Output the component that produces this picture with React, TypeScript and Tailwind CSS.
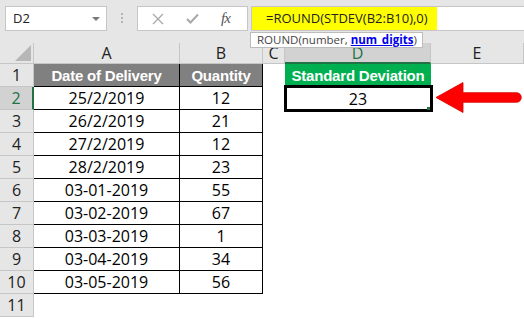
import React from "react"

const rows: [string, string][] = [
  ["25/2/2019", "12"],
  ["26/2/2019", "21"],
  ["27/2/2019", "12"],
  ["28/2/2019", "23"],
  ["03-01-2019", "55"],
  ["03-02-2019", "67"],
  ["03-03-2019", "1"],
  ["03-04-2019", "34"],
  ["03-05-2019", "56"],
]

const RowHead = ({ n, active }: { n: number; active?: boolean }) => (
  <div
    className={
      active
        ? "h-[23px] flex items-center justify-center bg-[#d2d2d2] text-[#217346] border-b border-b-[#c6c6c6] border-r-2 border-r-[#217346]"
        : "h-[23px] flex items-center justify-center bg-[#e6e6e6] text-[#222] border-b border-r border-[#c6c6c6]"
    }
  >
    {n}
  </div>
)

const ColHead = ({ label, active }: { label: string; active?: boolean }) => (
  <div
    className={
      active
        ? "h-[21px] flex items-center justify-center bg-[#d2d2d2] text-[#217346] border-r border-r-[#c6c6c6] border-b-2 border-b-[#217346]"
        : "h-[21px] flex items-center justify-center bg-[#e6e6e6] text-[#222] border-r border-b border-[#c6c6c6]"
    }
  >
    {label}
  </div>
)

// bold header cells, narrower face so they fit like the Calibri original
const headCls =
  "h-[23px] flex items-center justify-center text-white font-bold whitespace-nowrap font-['Liberation_Sans',sans-serif] text-[15px] tracking-[-0.2px]"

const Toolbar = () => (
  <div className="h-[43px] bg-[#e6e6e6] flex items-start pt-[6px] pl-[5px]">
    <div className="w-[102px] h-[25px] bg-white border border-[#c6c6c6] flex items-center justify-between pl-[7px] pr-[6px] text-[13px] text-[#222]">
      <span>D2</span>
      <svg width="8" height="4" viewBox="0 0 8 4">
        <path d="M0 0 L8 0 L4 4 Z" fill="#7a7a7a" />
      </svg>
    </div>
    <div className="ml-[14px] mt-[7px] flex flex-col gap-[2px]">
      <span className="w-[2px] h-[2px] bg-[#b4b4b4]" />
      <span className="w-[2px] h-[2px] bg-[#b4b4b4]" />
      <span className="w-[2px] h-[2px] bg-[#b4b4b4]" />
    </div>
    <div className="ml-[14px] w-[111px] h-[25px] bg-white border border-[#c6c6c6] flex items-center">
      <svg className="ml-[14px]" width="12" height="12" viewBox="0 0 12 12">
        <path d="M1 1 L11 11 M11 1 L1 11" stroke="#a8a8a8" strokeWidth="1.3" />
      </svg>
      <svg className="ml-[22px]" width="13" height="11" viewBox="0 0 13 11">
        <path d="M1 6 L4.5 9.5 L12 1.5" stroke="#a8a8a8" strokeWidth="2" fill="none" />
      </svg>
      <span className="ml-[22px] font-['Liberation_Serif',serif] italic text-[15px] text-[#555] tracking-[-1px]">
        fx
      </span>
    </div>
    <div className="ml-[3px] flex-1 h-[25px] bg-white border-t border-l border-b border-[#c6c6c6] flex">
      <div className="h-full bg-[#ffff00] pl-[14px] pr-[9px] flex items-center text-[13px] text-[#222] whitespace-nowrap">
        =ROUND(STDEV(B2:B10),0)
      </div>
    </div>
  </div>
)

export default function App() {
  return (
    <div className="w-[524px] h-[319px] bg-white relative overflow-hidden font-['Open_Sans',sans-serif] text-[16px] leading-none">
      <Toolbar />

      <div className="grid grid-cols-[34px_146px_83px_22px_146px_1fr]">
        <div className="h-[21px] bg-[#e6e6e6] border-r border-b border-[#c6c6c6] relative">
          <svg className="absolute right-[2px] bottom-[2px]" width="16" height="16" viewBox="0 0 16 16">
            <path d="M16 0 L16 16 L0 16 Z" fill="#b7b7b7" />
          </svg>
        </div>
        <ColHead label="A" />
        <ColHead label="B" />
        <ColHead label="C" />
        <ColHead label="D" active />
        <ColHead label="E" />

        <RowHead n={1} />
        <div className={headCls + " bg-[#808080] border-r border-b border-black"}>Date of Delivery</div>
        <div className={headCls + " bg-[#808080] border-r border-b border-black"}>Quantity</div>
        <div />
        <div className={headCls + " bg-[#00b050]"}>Standard Deviation</div>
        <div />

        {rows.map(([date, qty], i) => (
          <React.Fragment key={i}>
            <RowHead n={i + 2} active={i === 0} />
            <div className="h-[23px] flex items-center justify-center text-black border-r border-b border-black">
              {date}
            </div>
            <div className="h-[23px] flex items-center justify-center text-black border-r border-b border-black">
              {qty}
            </div>
            <div />
            {i === 0 ? (
              <div className="h-[23px] flex items-center justify-center text-black relative">
                23
                <div className="absolute left-[-1px] top-[-2px] right-[-2px] bottom-[-2px] border-[3px] border-black" />
                <div className="absolute right-[1px] bottom-[0px] w-[3px] h-[3px] bg-[#217346]" />
              </div>
            ) : (
              <div />
            )}
            <div />
          </React.Fragment>
        ))}

        <RowHead n={11} />
        <div />
        <div />
        <div />
        <div />
        <div />
      </div>

      <div className="absolute left-[250px] top-[32px] h-[16px] bg-white border border-[#bcbcbc] flex items-center pl-[6px] pr-[5px] text-[11.5px] text-[#444] whitespace-nowrap">
        ROUND(number,&nbsp;
        <span className="font-bold text-[#0000ee] underline">num_digits</span>)
      </div>

      <svg className="absolute left-[434px] top-[80px]" width="90" height="36" viewBox="0 0 90 36">
        <path
          d="M2 17.5 L29 2.5 L29 12.7 L82.5 12.7 A4.8 4.8 0 0 1 82.5 22.3 L29 22.3 L29 32.5 Z"
          fill="#ff0000"
          stroke="#d40000"
          strokeWidth="0.8"
        />
      </svg>
    </div>
  )
}
